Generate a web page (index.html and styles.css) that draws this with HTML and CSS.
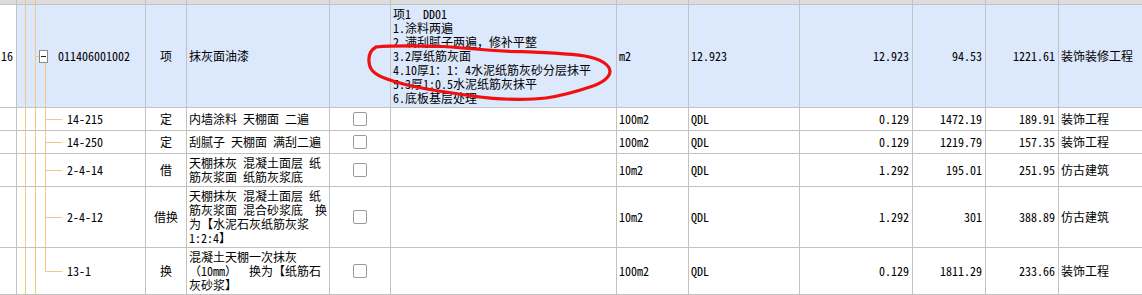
FILE: index.html
```html
<!DOCTYPE html>
<html lang="zh-CN">
<head>
<meta charset="utf-8">
<title>清单</title>
<link rel="stylesheet" href="styles.css">
</head>
<body>
<div class="sheet">
  <div class="row head">
    <div class="c c0"></div><div class="c tree"></div><div class="c"></div><div class="c"></div><div class="c"></div><div class="c"></div><div class="c"></div><div class="c"></div><div class="c"></div><div class="c"></div><div class="c"></div><div class="c last"></div>
  </div>

  <div class="row main">
    <div class="c c0 r"><span>16</span></div>
    <div class="c tree root"><span class="exp"></span><span class="code">011406001002</span></div>
    <div class="c ctr"><span>项</span></div>
    <div class="c"><span>抹灰面油漆</span></div>
    <div class="c"></div>
    <div class="c top"><div class="tx">项1  DD01<br>1.涂料两遍<br>2.满刮腻子两遍，修补平整<br>3.2厚纸筋灰面<br>4.10厚1：1：4水泥纸筋灰砂分层抹平<br>5.3厚1:0.5水泥纸筋灰抹平<br>6.底板基层处理</div></div>
    <div class="c"><span>m2</span></div>
    <div class="c"><span>12.923</span></div>
    <div class="c r"><span>12.923</span></div>
    <div class="c r"><span>94.53</span></div>
    <div class="c r"><span>1221.61</span></div>
    <div class="c last"><span>装饰装修工程</span></div>
  </div>

  <div class="row">
    <div class="c c0"></div>
    <div class="c tree leaf"><span class="code">14-215</span></div>
    <div class="c ctr"><span>定</span></div>
    <div class="c"><span>内墙涂料 天棚面 二遍</span></div>
    <div class="c ctr"><span class="cb"></span></div>
    <div class="c"></div>
    <div class="c"><span>100m2</span></div>
    <div class="c"><span>QDL</span></div>
    <div class="c r"><span>0.129</span></div>
    <div class="c r"><span>1472.19</span></div>
    <div class="c r"><span>189.91</span></div>
    <div class="c last"><span>装饰工程</span></div>
  </div>

  <div class="row">
    <div class="c c0"></div>
    <div class="c tree leaf"><span class="code">14-250</span></div>
    <div class="c ctr"><span>定</span></div>
    <div class="c"><span>刮腻子 天棚面 满刮二遍</span></div>
    <div class="c ctr"><span class="cb"></span></div>
    <div class="c"></div>
    <div class="c"><span>100m2</span></div>
    <div class="c"><span>QDL</span></div>
    <div class="c r"><span>0.129</span></div>
    <div class="c r"><span>1219.79</span></div>
    <div class="c r"><span>157.35</span></div>
    <div class="c last"><span>装饰工程</span></div>
  </div>

  <div class="row">
    <div class="c c0"></div>
    <div class="c tree leaf"><span class="code">2-4-14</span></div>
    <div class="c ctr"><span>借</span></div>
    <div class="c"><div class="tx">天棚抹灰 混凝土面层 纸<br>筋灰浆面 纸筋灰浆底</div></div>
    <div class="c ctr"><span class="cb"></span></div>
    <div class="c"></div>
    <div class="c"><span>10m2</span></div>
    <div class="c"><span>QDL</span></div>
    <div class="c r"><span>1.292</span></div>
    <div class="c r"><span>195.01</span></div>
    <div class="c r"><span>251.95</span></div>
    <div class="c last"><span>仿古建筑</span></div>
  </div>

  <div class="row">
    <div class="c c0"></div>
    <div class="c tree leaf"><span class="code">2-4-12</span></div>
    <div class="c ctr"><span>借换</span></div>
    <div class="c"><div class="tx">天棚抹灰 混凝土面层 纸<br>筋灰浆面 混合砂浆底  换<br>为【水泥石灰纸筋灰浆<br>1:2:4】</div></div>
    <div class="c ctr"><span class="cb"></span></div>
    <div class="c"></div>
    <div class="c"><span>10m2</span></div>
    <div class="c"><span>QDL</span></div>
    <div class="c r"><span>1.292</span></div>
    <div class="c r"><span>301</span></div>
    <div class="c r"><span>388.89</span></div>
    <div class="c last"><span>仿古建筑</span></div>
  </div>

  <div class="row">
    <div class="c c0"></div>
    <div class="c tree leaf end"><span class="code">13-1</span></div>
    <div class="c ctr"><span>换</span></div>
    <div class="c"><div class="tx">混凝土天棚一次抹灰<br>（10mm）  换为【纸筋石<br>灰砂浆】</div></div>
    <div class="c ctr"><span class="cb"></span></div>
    <div class="c"></div>
    <div class="c"><span>100m2</span></div>
    <div class="c"><span>QDL</span></div>
    <div class="c r"><span>0.129</span></div>
    <div class="c r"><span>1811.29</span></div>
    <div class="c r"><span>233.66</span></div>
    <div class="c last"><span>装饰工程</span></div>
  </div>
</div>

<svg class="mark" width="1142" height="295" viewBox="0 0 1142 295" aria-hidden="true">
  <path d="M376 47 C388 46 410 45.5 443 46.5 C460 47.5 475 49.5 510 51.3 C540 52 565 53 585 56 C600 59 609 64 610 71 C610 78 602 83 590 87 C578 91 560 96 546 98 C530 100 505 99.5 493 98.3 C475 97 445 92 427 89 C410 86 395 82 387 79 C378 76 371 72 369.5 65 C368 58 369 51 376 47" fill="none" stroke="#f01010" stroke-width="3.2" stroke-linejoin="round" stroke-linecap="round"/>
</svg>
</body>
</html>
```

FILE: styles.css
```css
html, body {
  margin: 0;
  padding: 0;
  background: #ffffff;
}

body {
  width: 1142px;
  height: 295px;
  overflow: hidden;
  position: relative;
}

.sheet {
  --line: #c2c2c2;
  --tree: #f6c683;
  font-family: "Noto Sans Mono CJK SC", "Noto Sans CJK SC", "DejaVu Sans Mono", monospace;
  font-size: 12px;
  line-height: 14px;
  color: #000;
}

.row {
  display: grid;
  grid-template-columns: 17px 129px 41px 143px 61px 226px 72px 111px 113px 73px 73px 1fr;
  min-height: 23px;
  background: #ffffff;
}

.row.head {
  min-height: 5px;
  height: 5px;
  background: #dcdcdc;
}

.row.main {
  background: #dce8fc;
}

.c {
  box-sizing: border-box;
  border-right: 1px solid var(--line);
  border-bottom: 1px solid var(--line);
  padding: 2px 2px;
  display: flex;
  align-items: center;
  white-space: pre;
  overflow: hidden;
  min-width: 0;
}

.head .c {
  padding: 0;
}

.c.last {
  border-right: none;
}

.c0 {
  background: #ffffff;
}

.head .c0 {
  background: #dcdcdc;
}

.c.r {
  justify-content: flex-end;
  padding-right: 3px;
}

.c.ctr {
  justify-content: center;
}

.c.top {
  align-items: flex-start;
}

.tx {
  white-space: pre;
}

/* tree connector lines */
.tree {
  background-image:
    linear-gradient(var(--tree), var(--tree)),
    linear-gradient(var(--tree), var(--tree));
  background-size: 1px 100%, 1px 100%;
  background-position: 8px 0, 18px 0;
  background-repeat: no-repeat;
}

.tree.root {
  padding-left: 22px;
  background-image:
    linear-gradient(var(--tree), var(--tree)),
    linear-gradient(var(--tree), var(--tree)),
    linear-gradient(var(--tree), var(--tree)),
    linear-gradient(var(--tree), var(--tree));
  background-size: 1px 100%, 1px 100%, 4px 1px, 1px calc(100% - 56px);
  background-position: 8px 0, 18px 0, 18px 50%, 28px 100%;
}

.tree.leaf {
  padding-left: 50px;
  background-image:
    linear-gradient(var(--tree), var(--tree)),
    linear-gradient(var(--tree), var(--tree)),
    linear-gradient(var(--tree), var(--tree)),
    linear-gradient(var(--tree), var(--tree));
  background-size: 1px 100%, 1px 100%, 1px 100%, 17px 1px;
  background-position: 8px 0, 18px 0, 28px 0, 28px 50%;
}

.tree.leaf.end {
  background-size: 1px 100%, 1px 100%, 1px 50%, 17px 1px;
}

.exp {
  box-sizing: border-box;
  width: 9px;
  height: 13px;
  border: 1px solid #8a8a8a;
  background: #ffffff linear-gradient(#202020, #202020) center / 5px 1px no-repeat;
  flex: none;
  margin-right: 10px;
}

.cb {
  box-sizing: border-box;
  width: 14px;
  height: 14px;
  border: 1px solid #9a9a9a;
  border-radius: 2px;
  background: #ffffff;
}

.mark {
  position: absolute;
  left: 0;
  top: 0;
  pointer-events: none;
}
```
